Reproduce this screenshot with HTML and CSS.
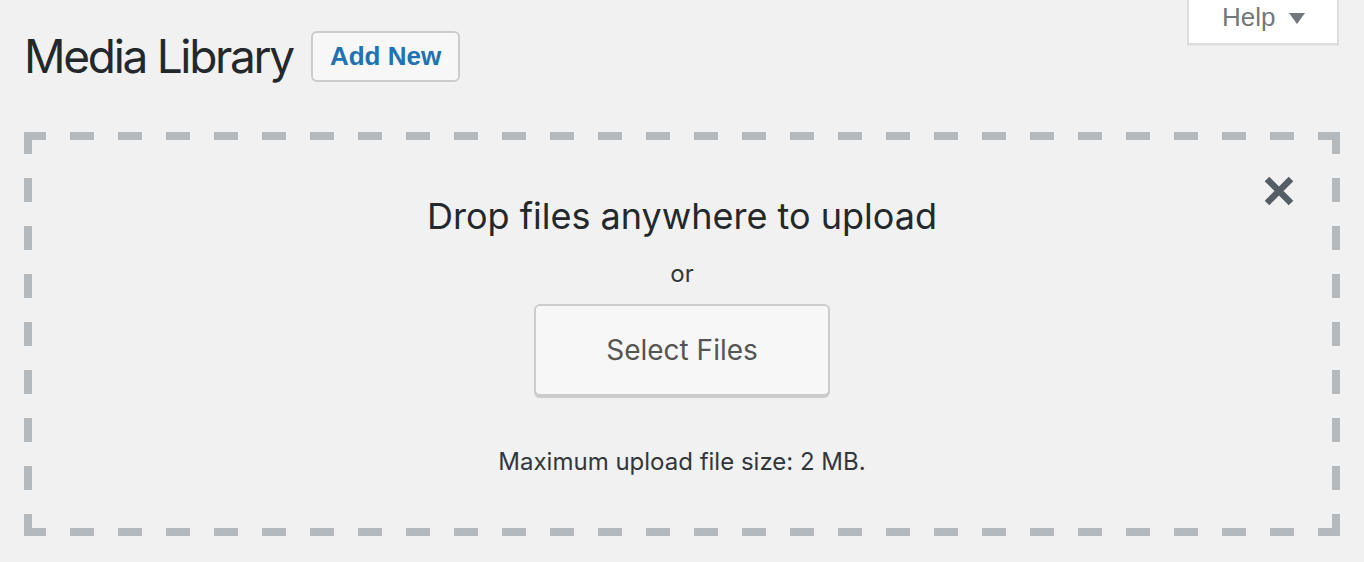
FILE: index.html
```html
<!DOCTYPE html>
<html lang="en">
<head>
	<meta charset="utf-8" />
	<title>Media Library</title>
	<link rel="stylesheet" href="styles.css">
</head>
<body>
	<div id="header">
		<div class="title-group">
			<h1 class="page-title">Media Library</h1>
			<a class="add-new" href="#">Add New</a>
		</div>
		<button class="help-tab">
			Help
			<svg class="help-arrow" width="16" height="11" viewBox="0 0 16 11"><polygon points="0,0 16,0 8,11" fill="#72777c"/></svg>
		</button>
	</div>

	<div class="uploader">
		<button class="close" aria-label="Close uploader">
			<svg width="30" height="30" viewBox="0 0 30 30"><path d="M3 3 L27 27 M27 3 L3 27" stroke="#555d66" stroke-width="6.5" fill="none"/></svg>
		</button>
		<h2 class="drop-title">Drop files anywhere to upload</h2>
		<p class="or">or</p>
		<button class="select-files">Select Files</button>
		<p class="max-size">Maximum upload file size: 2 MB.</p>
	</div>
</body>
</html>
```

FILE: styles.css
```css
body {
	margin: 0;
	background-color: #f1f1f1;
	font-family: Inter, "Noto Sans", sans-serif;
	color: #23282d;
}

#header {
	display: flex;
	align-items: flex-start;
	justify-content: space-between;
	height: 132px;
	padding: 0 25px 0 24px;
	box-sizing: border-box;
}

.title-group {
	display: flex;
	align-items: center;
	gap: 18px;
	margin-top: 31px;
}

.page-title {
	margin: 0;
	font-size: 46px;
	font-weight: 400;
	line-height: 51px;
	letter-spacing: -2.3px;
	color: #23282d;
}

.add-new {
	display: block;
	padding: 8px 17px;
	line-height: 31px;
	font-family: "Liberation Sans", Arial, sans-serif;
	font-size: 26px;
	font-weight: 700;
	color: #2271b1;
	text-decoration: none;
	background-color: #f7f7f7;
	border: 2px solid #cccccc;
	border-radius: 6px;
}

.help-tab {
	display: flex;
	align-items: center;
	gap: 14px;
	width: 152px;
	height: 45px;
	padding: 0 0 9px 33px;
	box-sizing: border-box;
	font-family: "Liberation Sans", Arial, sans-serif;
	font-size: 26px;
	color: #72777c;
	background-color: #fff;
	border: 2px solid #dddddd;
	border-top: none;
	box-shadow: 0 1px 0 rgba(0,0,0,0.04);
}

.help-arrow {
	display: block;
	margin-top: 2px;
}

.uploader {
	position: relative;
	display: flex;
	flex-direction: column;
	align-items: center;
	height: 404px;
	margin: 0 24px;
	padding-top: 60px;
	box-sizing: border-box;
	background:
		repeating-linear-gradient(90deg, #b4b9be -2px 22px, transparent 22px 46px) left top / 100% 8px no-repeat,
		repeating-linear-gradient(90deg, #b4b9be -2px 22px, transparent 22px 46px) left bottom / 100% 8px no-repeat,
		repeating-linear-gradient(180deg, #b4b9be -2px 22px, transparent 22px 46px) left top / 8px 100% no-repeat,
		repeating-linear-gradient(180deg, #b4b9be -2px 22px, transparent 22px 46px) right top / 8px 100% no-repeat;
}

.close {
	position: absolute;
	top: 44px;
	right: 46px;
	padding: 0;
	border: none;
	background: none;
	line-height: 0;
}

.drop-title {
	margin: 0;
	font-size: 36px;
	font-weight: 400;
	line-height: 48px;
	color: #23282d;
}

.or {
	margin: 16px 0 0;
	font-size: 24px;
	line-height: 36px;
	color: #32373c;
}

.select-files {
	width: 296px;
	height: 92px;
	margin-top: 12px;
	font-family: Inter, "Noto Sans", sans-serif;
	font-size: 28px;
	color: #555555;
	background-color: #f7f7f7;
	border: 2px solid #cccccc;
	border-radius: 6px;
	box-shadow: 0 2px 0 #cccccc;
}

.max-size {
	margin: 51px 0 0;
	font-size: 24px;
	line-height: 30px;
	color: #32373c;
}
```
